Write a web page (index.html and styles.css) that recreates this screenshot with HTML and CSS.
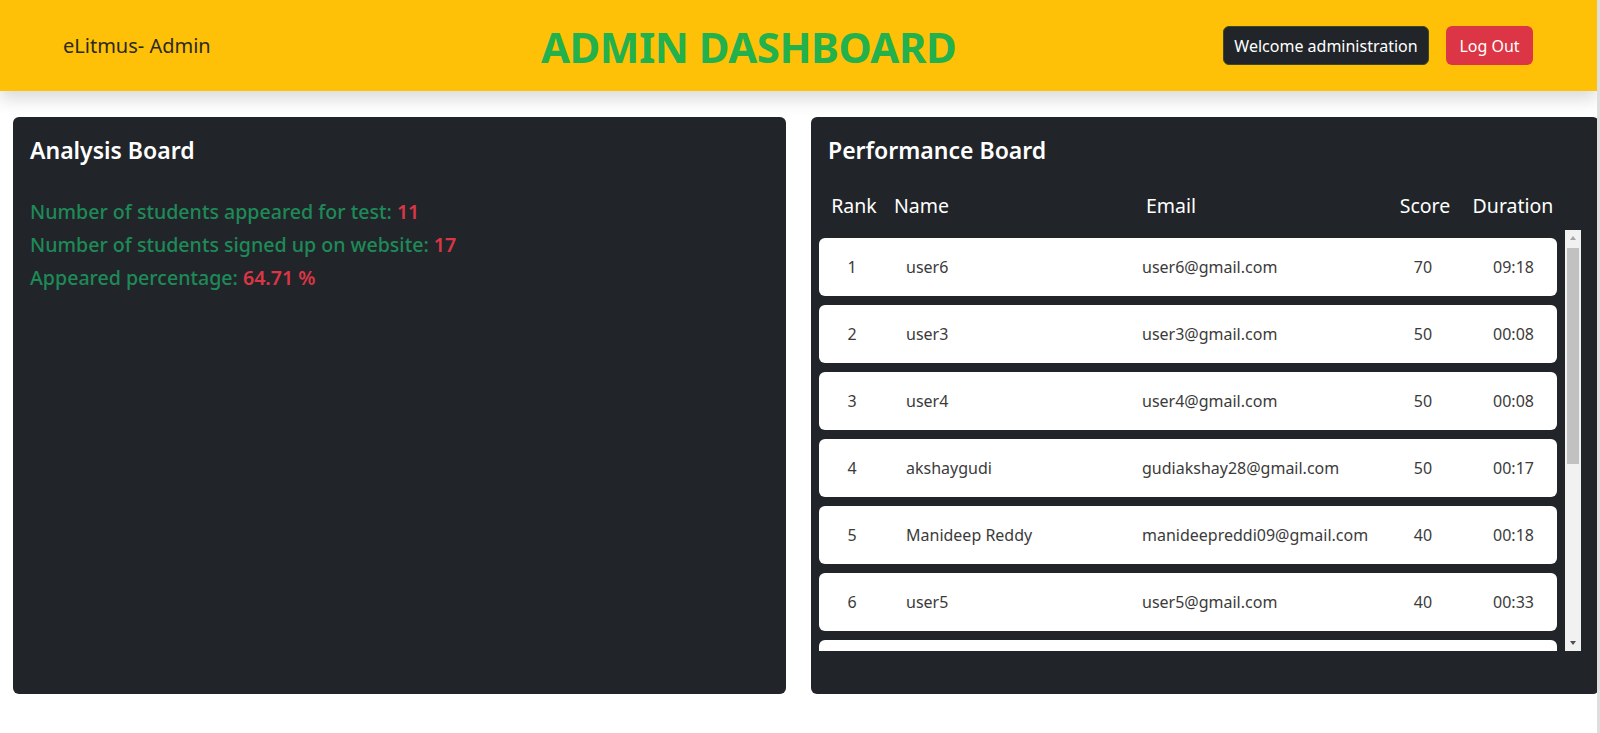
FILE: index.html
```html
<!DOCTYPE html>
<html lang="en">
<head>
<meta charset="utf-8">
<title>eLitmus Admin Dashboard</title>
<link rel="stylesheet" href="styles.css">
</head>
<body>
<header class="topbar">
  <div class="brand">eLitmus- Admin</div>
  <h1 class="page-title">ADMIN DASHBOARD</h1>
  <div class="actions">
    <button class="btn btn-dark">Welcome administration</button>
    <button class="btn btn-red">Log Out</button>
  </div>
</header>

<main class="boards">
  <section class="board">
    <h2 class="board-title">Analysis Board</h2>
    <div class="stats">
      <p class="stat">Number of students appeared for test: <span class="num">11</span></p>
      <p class="stat">Number of students signed up on website: <span class="num">17</span></p>
      <p class="stat">Appeared percentage: <span class="num">64.71 %</span></p>
    </div>
  </section>

  <section class="board">
    <h2 class="board-title">Performance Board</h2>
    <div class="thead">
      <div class="th th-rank">Rank</div>
      <div class="th th-name">Name</div>
      <div class="th th-email">Email</div>
      <div class="th th-score">Score</div>
      <div class="th th-dur">Duration</div>
    </div>
    <div class="scroll-wrap">
      <div class="list">
        <div class="row"><div class="c-rank">1</div><div class="c-name">user6</div><div class="c-email">user6@gmail.com</div><div class="c-score">70</div><div class="c-dur">09:18</div></div>
        <div class="row"><div class="c-rank">2</div><div class="c-name">user3</div><div class="c-email">user3@gmail.com</div><div class="c-score">50</div><div class="c-dur">00:08</div></div>
        <div class="row"><div class="c-rank">3</div><div class="c-name">user4</div><div class="c-email">user4@gmail.com</div><div class="c-score">50</div><div class="c-dur">00:08</div></div>
        <div class="row"><div class="c-rank">4</div><div class="c-name">akshaygudi</div><div class="c-email">gudiakshay28@gmail.com</div><div class="c-score">50</div><div class="c-dur">00:17</div></div>
        <div class="row"><div class="c-rank">5</div><div class="c-name">Manideep Reddy</div><div class="c-email">manideepreddi09@gmail.com</div><div class="c-score">40</div><div class="c-dur">00:18</div></div>
        <div class="row"><div class="c-rank">6</div><div class="c-name">user5</div><div class="c-email">user5@gmail.com</div><div class="c-score">40</div><div class="c-dur">00:33</div></div>
        <div class="row row-stub"></div>
      </div>
      <div class="vbar">
        <div class="vbar-btn vbar-up"><svg width="8" height="6" viewBox="0 0 8 6"><polygon points="4,1 7,5 1,5" fill="#a3a3a3"/></svg></div>
        <div class="vbar-track"><div class="vbar-thumb"></div></div>
        <div class="vbar-btn vbar-down"><svg width="8" height="6" viewBox="0 0 8 6"><polygon points="1,1 7,1 4,5" fill="#505050"/></svg></div>
      </div>
    </div>
  </section>
</main>
</body>
</html>
```

FILE: styles.css
```css
* { box-sizing: border-box; }

html {
  margin: 0;
  padding: 0;
  background: #dedede;
}

body {
  margin: 0;
  padding: 0;
  font-family: "Noto Sans", "Open Sans", sans-serif;
  color: #212529;
  width: 1597px;
  height: 733px;
  overflow: hidden;
  background: #fff;
}

.topbar {
  position: relative;
  z-index: 2;
  height: 91px;
  background: #ffc107;
  display: flex;
  align-items: center;
  padding: 0 64px 0 63px;
  box-shadow: 0 8px 16px rgba(0, 0, 0, 0.15);
}

.brand {
  width: 147px;
  font-size: 20px;
  color: #2b2a21;
  white-space: nowrap;
}

.page-title {
  margin: 4px 0 0 331px;
  font-size: 42px;
  font-weight: 700;
  color: #22b14c;
  line-height: 1.2;
  letter-spacing: -0.5px;
  white-space: nowrap;
}

.actions {
  margin-left: auto;
  display: flex;
  gap: 17px;
}

.btn {
  font-family: inherit;
  font-size: 16px;
  line-height: 24px;
  height: 39px;
  padding: 6px 8px;
  border-radius: 6px;
  color: #fff;
  border: 1px solid transparent;
  white-space: nowrap;
}

.btn-dark {
  background: #212529;
  border-color: #3a4a1c;
  width: 206px;
}

.btn-red {
  background: #dc3545;
  width: 87px;
}

.boards {
  display: flex;
  gap: 25px;
  padding: 26px 0 0 13px;
}

.board {
  flex: 0 0 773px;
  height: 577px;
  background: #212529;
  border-radius: 6px;
  padding: 17px 18px 0 17px;
  color: #fff;
}

.board-title {
  margin: 0;
  font-size: 23px;
  font-weight: 600;
  line-height: 32px;
}

.stats {
  margin-top: 32px;
}

.stat {
  margin: 0 0 5px;
  font-size: 19.6px;
  font-weight: 500;
  line-height: 28px;
  color: #1e8a57;
  white-space: nowrap;
}

.num {
  color: #dc3545;
  font-weight: 600;
}

.thead {
  display: grid;
  grid-template-columns: 70px 131px 302px 58px 88px 90px;
  margin: 26px 0 0 -9px;
  font-size: 19.5px;
  line-height: 28px;
  height: 38px;
  white-space: nowrap;
}

.th-rank { text-align: center; }
.th-name { padding-left: 5px; }
.th-email { text-align: center; }
.th-score { grid-column: 5; text-align: center; padding-left: 2px; }
.th-dur { text-align: center; }

.scroll-wrap {
  display: flex;
  margin-left: -9px;
  width: 762px;
  height: 421px;
}

.list {
  width: 746px;
  height: 100%;
  overflow: hidden;
  padding-top: 8px;
}

.row {
  display: grid;
  grid-template-columns: 66px 236px 258px 88px 90px;
  align-items: center;
  width: 738px;
  height: 58px;
  margin-bottom: 9px;
  background: #fff;
  border-radius: 6px;
  color: #3b3b3b;
  font-size: 16px;
  white-space: nowrap;
}

.c-rank { text-align: center; }
.c-name { padding-left: 21px; }
.c-email { padding-left: 21px; }
.c-score { text-align: center; }
.c-dur { text-align: center; padding-left: 3px; }

.vbar {
  width: 16px;
  height: 100%;
  background: #f1f1f1;
  display: flex;
  flex-direction: column;
}

.vbar-btn {
  height: 16px;
  display: flex;
  align-items: center;
  justify-content: center;
}

.vbar-track {
  flex: 1;
  padding: 2px 2px 0 2px;
}

.vbar-thumb {
  height: 216px;
  background: #c1c1c1;
}
```
